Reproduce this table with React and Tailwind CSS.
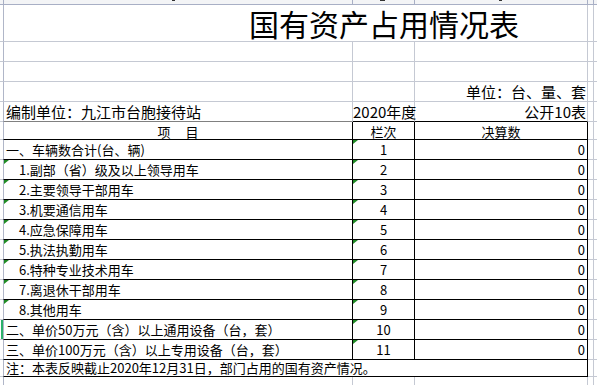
const GRID = "border-[#c5c9d3]";

const items = [
  { label: "一、车辆数合计(台、辆)", no: "1" },
  { label: "1.副部（省）级及以上领导用车", no: "2", sub: true },
  { label: "2.主要领导干部用车", no: "3", sub: true },
  { label: "3.机要通信用车", no: "4", sub: true },
  { label: "4.应急保障用车", no: "5", sub: true },
  { label: "5.执法执勤用车", no: "6", sub: true },
  { label: "6.特种专业技术用车", no: "7", sub: true },
  { label: "7.离退休干部用车", no: "8", sub: true },
  { label: "8.其他用车", no: "9", sub: true },
  { label: "二、单价50万元（含）以上通用设备（台，套）", no: "10", active: true },
  { label: "三、单价100万元（含）以上专用设备（台，套）", no: "11" },
];

const Flag = () => (
  <svg className="absolute left-0 top-0" width="5" height="4" viewBox="0 0 5 4">
    <path d="M0 0H5L0 4Z" fill="#1f8a24" />
  </svg>
);

const Tail = ({ dark }) => (
  <>
    <div className={`w-[6px] border-b border-r ${GRID}`} />
    <div className={`w-[3px] border-b ${GRID}`} />
  </>
);

const BlankRow = ({ children, c }) => (
  <div className="flex h-[20px] leading-[20px] text-[15px]">
    <div className={`w-[3px] border-b ${GRID}`} />
    <div className={`w-[350px] border-l border-l-[#b0b6c8] border-b border-r ${GRID}`}>{children}</div>
    <div className={`w-[62px] border-b border-r ${GRID}`} />
    <div className={`w-[173px] border-b border-r ${GRID} text-right pr-[1px]`}>{c}</div>
    <Tail />
  </div>
);

export default function App() {
  return (
    <div
      className="w-[597px] h-[385px] overflow-hidden bg-white text-black flex flex-col"
      style={{ fontFamily: '"Noto Sans CJK SC", "Noto Sans", sans-serif' }}
    >
      {/* cut-off row above the title */}
      <div className="flex h-[5px] bg-[#f3f4f6]">
        <div className="w-[3px] border-b border-[#a8afc5]" />
        <div className="w-[350px] border-l border-r border-b border-l-[#a8afc5] border-[#a8afc5] flex">
          <span className="ml-[168px] w-[3px] h-[1px] bg-[#333]" />
        </div>
        <div className="w-[62px] border-r border-b border-[#a8afc5] flex">
          <span className="ml-[27px] w-[5px] h-[1px] bg-[#333]" />
        </div>
        <div className="w-[173px] border-r border-b border-[#a8afc5] flex">
          <span className="ml-[84px] w-[3px] h-[1px] bg-[#333]" />
        </div>
        <div className="w-[6px] border-b border-r border-[#a8afc5]" />
        <div className="w-[3px] border-b border-[#a8afc5]" />
      </div>

      {/* title */}
      <div className="flex h-[37px]">
        <div className={`w-[3px] border-b ${GRID}`} />
        <div className={`w-[585px] border-l border-l-[#b0b6c8] border-b border-r ${GRID} pl-[245px] text-[30px] leading-[36px] whitespace-nowrap`}>
          国有资产占用情况表
        </div>
        <Tail />
      </div>

      <BlankRow />
      <BlankRow />
      <BlankRow c="单位：台、量、套" />

      {/* unit / year row */}
      <div className="flex h-[20px] leading-[20px] text-[15px] whitespace-nowrap">
        <div className={`w-[3px] border-b ${GRID}`} />
        <div className="w-[350px] border-l border-l-[#b0b6c8] border-r border-r-[#c5c9d3] border-b border-b-[#808080] pl-[2px]">
          编制单位：九江市台胞接待站
        </div>
        <div className="w-[62px] border-r border-r-[#c5c9d3] border-b border-b-black">2020年度</div>
        <div className="w-[173px] border-r border-r-[#c5c9d3] border-b border-b-black text-right pr-[1px]">公开10表</div>
        <Tail />
      </div>

      {/* header */}
      <div className="flex h-[18px] leading-[19px] text-[13px]">
        <div className={`w-[3px] border-b ${GRID}`} />
        <div className="w-[350px] border-l border-l-[#b0b6c8] border-r border-b border-black flex justify-center">
          <span>项</span>
          <span className="ml-[15px]">目</span>
        </div>
        <div className="w-[62px] border-r border-b border-black text-center">栏次</div>
        <div className="w-[173px] border-r border-b border-black text-center">决算数</div>
        <Tail />
      </div>

      {items.map((it) => (
        <div key={it.no} className="flex h-[20px] leading-[20px] text-[13px] whitespace-nowrap">
          <div className={`w-[3px] border-b ${GRID} flex`}>
            {it.active && <div className="ml-[1px] w-[2px] bg-[#2cb06a]" />}
          </div>
          <div
            className={`relative w-[350px] border-l border-l-[#b0b6c8] border-r border-b border-black ${
              it.sub ? "pl-[15px]" : "pl-[2px]"
            }`}
          >
            {it.sub && <Flag />}
            {it.label}
          </div>
          <div className="relative w-[62px] border-r border-b border-black text-center">
            <Flag />
            {it.no}
          </div>
          <div className="w-[173px] border-r border-b border-black text-right pr-[2px]">0</div>
          <Tail />
        </div>
      ))}

      {/* note */}
      <div className="flex h-[17px] leading-[16px] text-[13px] whitespace-nowrap">
        <div className={`w-[3px] border-b ${GRID}`} />
        <div className="w-[585px] border-l border-l-[#b0b6c8] border-r border-b border-black pl-[2px]">
          注：本表反映截止2020年12月31日，部门占用的国有资产情况。
        </div>
        <Tail />
      </div>

      {/* empty space below */}
      <div className="flex flex-1">
        <div className="w-[3px]" />
        <div className={`w-[350px] border-l border-l-[#b0b6c8] border-r ${GRID}`} />
        <div className={`w-[62px] border-r ${GRID}`} />
        <div className={`w-[173px] border-r ${GRID}`} />
        <div className={`w-[6px] border-r ${GRID}`} />
        <div className="w-[3px]" />
      </div>
    </div>
  );
}
